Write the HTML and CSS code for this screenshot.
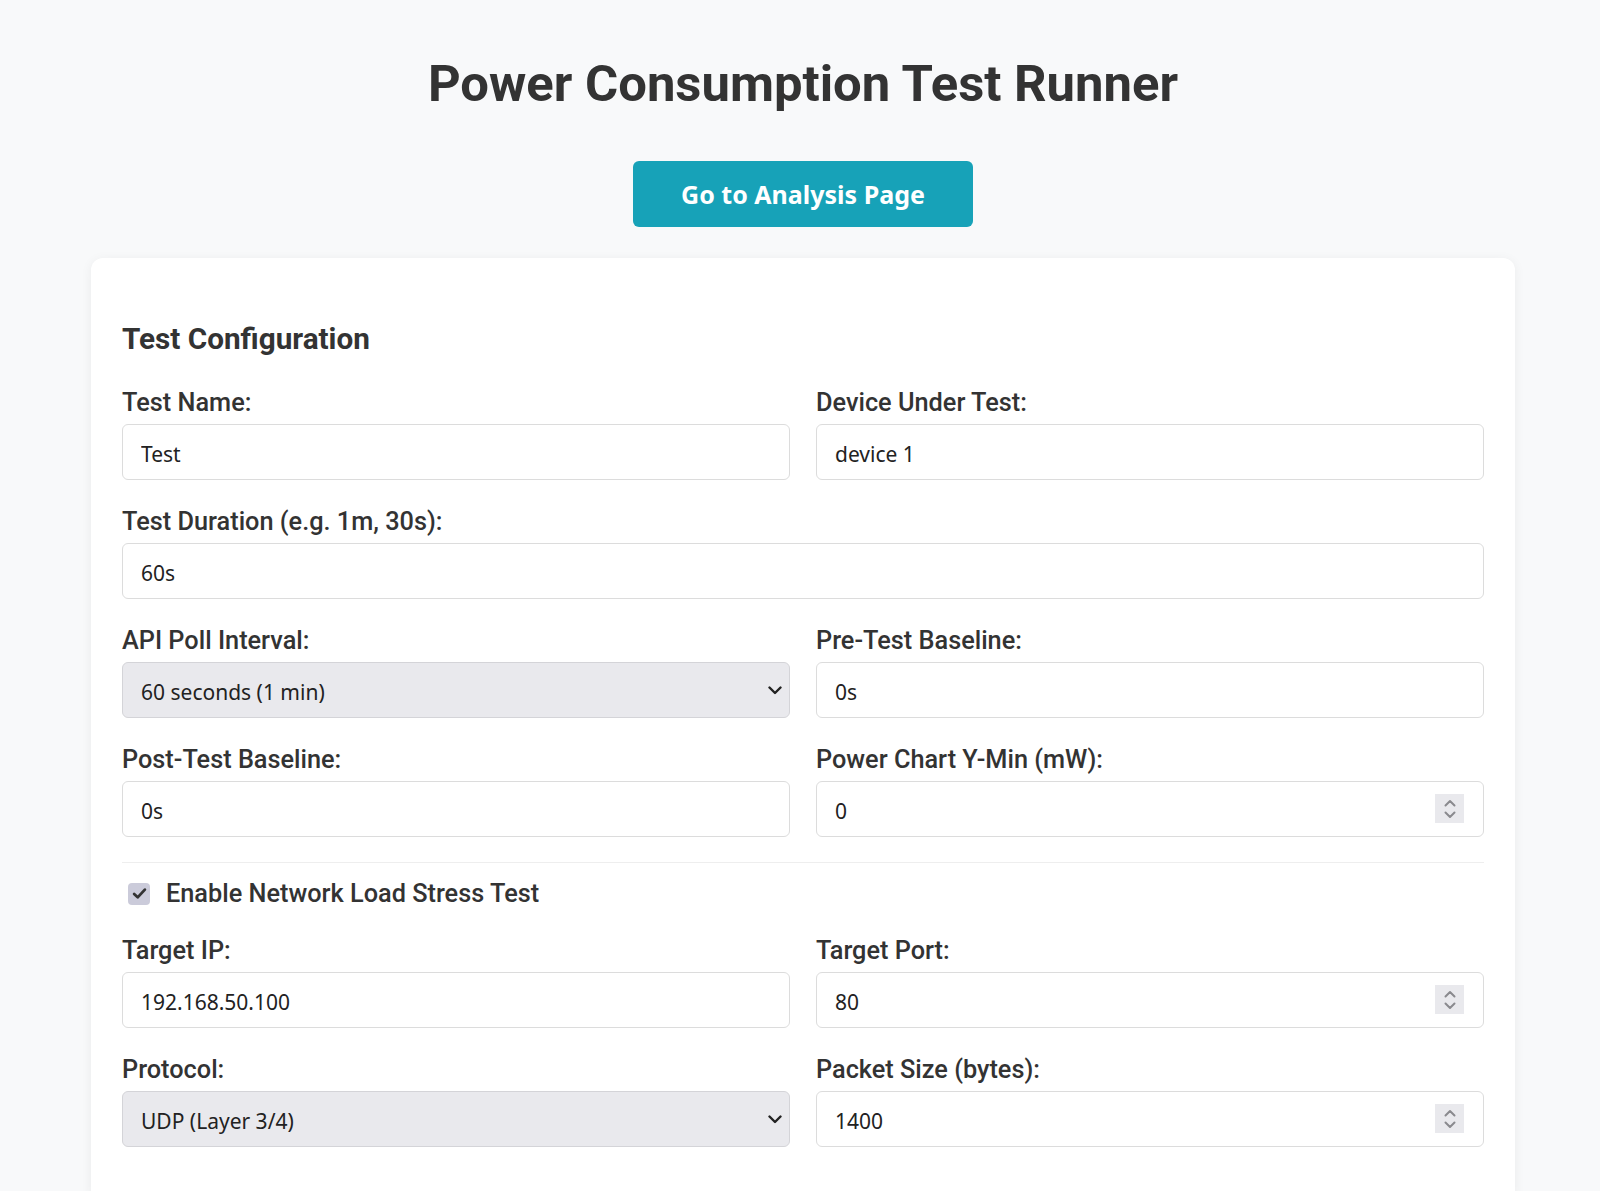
FILE: index.html
```html
<!DOCTYPE html>
<html lang="en">
<head>
<meta charset="utf-8">
<title>Power Consumption Test Runner</title>
<link rel="stylesheet" href="styles.css">
</head>
<body>
<div class="container">
  <h1 class="title">Power Consumption Test Runner</h1>
  <div class="nav">
    <button class="btn-info" type="button">Go to Analysis Page</button>
  </div>
  <div class="card">
    <h2 class="card-title">Test Configuration</h2>
    <div class="grid">
      <div class="group">
        <label class="label">Test Name:</label>
        <input class="field" type="text" value="Test">
      </div>
      <div class="group">
        <label class="label">Device Under Test:</label>
        <input class="field" type="text" value="device 1">
      </div>
      <div class="group span2">
        <label class="label">Test Duration (e.g. 1m, 30s):</label>
        <input class="field" type="text" value="60s">
      </div>
      <div class="group">
        <label class="label">API Poll Interval:</label>
        <div class="select-wrap">
          <select class="field select">
            <option>60 seconds (1 min)</option>
          </select>
          <svg class="chev" width="14" height="9" viewBox="0 0 14 9"><path d="M1.5 1.5 L7 7 L12.5 1.5" fill="none" stroke="#222" stroke-width="2.4" stroke-linecap="round" stroke-linejoin="round"/></svg>
        </div>
      </div>
      <div class="group">
        <label class="label">Pre-Test Baseline:</label>
        <input class="field" type="text" value="0s">
      </div>
      <div class="group">
        <label class="label">Post-Test Baseline:</label>
        <input class="field" type="text" value="0s">
      </div>
      <div class="group">
        <label class="label">Power Chart Y-Min (mW):</label>
        <div class="num-wrap">
          <input class="field" type="text" value="0">
          <span class="spin"><svg width="14" height="22" viewBox="0 0 14 22"><path d="M2.5 7.5 L7 3 L11.5 7.5" fill="none" stroke="#8a8a8e" stroke-width="2" stroke-linecap="round" stroke-linejoin="round"/><path d="M2.5 14.5 L7 19 L11.5 14.5" fill="none" stroke="#8a8a8e" stroke-width="2" stroke-linecap="round" stroke-linejoin="round"/></svg></span>
        </div>
      </div>
    </div>

    <div class="network">
      <div class="check-row">
        <span class="checkbox"><svg width="15" height="13" viewBox="0 0 14 12"><path d="M2 6.5 L5.3 9.6 L12 2.4" fill="none" stroke="#333" stroke-width="2.6" stroke-linecap="round" stroke-linejoin="round"/></svg></span>
        <span class="check-label">Enable Network Load Stress Test</span>
      </div>
      <div class="grid">
        <div class="group">
          <label class="label">Target IP:</label>
          <input class="field" type="text" value="192.168.50.100">
        </div>
        <div class="group">
          <label class="label">Target Port:</label>
          <div class="num-wrap">
            <input class="field" type="text" value="80">
            <span class="spin"><svg width="14" height="22" viewBox="0 0 14 22"><path d="M2.5 7.5 L7 3 L11.5 7.5" fill="none" stroke="#8a8a8e" stroke-width="2" stroke-linecap="round" stroke-linejoin="round"/><path d="M2.5 14.5 L7 19 L11.5 14.5" fill="none" stroke="#8a8a8e" stroke-width="2" stroke-linecap="round" stroke-linejoin="round"/></svg></span>
          </div>
        </div>
        <div class="group">
          <label class="label">Protocol:</label>
          <div class="select-wrap">
            <select class="field select">
              <option>UDP (Layer 3/4)</option>
            </select>
            <svg class="chev" width="14" height="9" viewBox="0 0 14 9"><path d="M1.5 1.5 L7 7 L12.5 1.5" fill="none" stroke="#222" stroke-width="2.4" stroke-linecap="round" stroke-linejoin="round"/></svg>
          </div>
        </div>
        <div class="group">
          <label class="label">Packet Size (bytes):</label>
          <div class="num-wrap">
            <input class="field" type="text" value="1400">
            <span class="spin"><svg width="14" height="22" viewBox="0 0 14 22"><path d="M2.5 7.5 L7 3 L11.5 7.5" fill="none" stroke="#8a8a8e" stroke-width="2" stroke-linecap="round" stroke-linejoin="round"/><path d="M2.5 14.5 L7 19 L11.5 14.5" fill="none" stroke="#8a8a8e" stroke-width="2" stroke-linecap="round" stroke-linejoin="round"/></svg></span>
          </div>
        </div>
      </div>
    </div>
  </div>
</div>
</body>
</html>
```
FILE: styles.css
```css
html, body {
  margin: 0;
  padding: 0;
  background: #f8f9fa;
}
body {
  padding-left: 6px;
  font-family: Roboto, "Liberation Sans", sans-serif;
  color: #333;
}
.container {
  max-width: 1424px;
  margin: 0 auto;
  padding-top: 55px;
}
.title {
  margin: 0;
  text-align: center;
  font-family: Roboto, sans-serif;
  font-weight: 700;
  font-size: 50.8px;
  line-height: 58px;
  color: #333;
}
.nav {
  display: flex;
  justify-content: center;
  margin-top: 48px;
}
.btn-info {
  background: #17a2b8;
  color: #fff;
  border: none;
  border-radius: 6px;
  padding: 16px 48px;
  font-family: "Noto Sans", "Open Sans", sans-serif;
  font-weight: 700;
  font-size: 25px;
  line-height: normal;
}
.card {
  margin-top: 31px;
  background: #fff;
  border-radius: 12px;
  box-shadow: 0 2px 12px rgba(0, 0, 0, 0.06);
  padding: 31px 31px 31px;
}
.card-title {
  margin: 32px 0 31.8px;
  font-size: 29.7px;
  font-weight: 700;
  line-height: 35px;
  color: #333;
}
.grid {
  display: grid;
  grid-template-columns: 1fr 1fr;
  column-gap: 26px;
}
.span2 {
  grid-column: 1 / span 2;
}
.group {
  margin-bottom: 26.3px;
  min-width: 0;
}
.label {
  display: block;
  font-size: 25.3px;
  font-weight: 500;
  line-height: 30px;
  margin-bottom: 6.7px;
  color: #333;
}
.field {
  display: block;
  box-sizing: border-box;
  width: 100%;
  height: 56px;
  margin: 0;
  padding: 4px 18px 0;
  border: 1px solid #dcdcdc;
  border-radius: 6px;
  background: #fff;
  font-family: "Noto Sans", "Open Sans", sans-serif;
  font-size: 21px;
  color: #222;
  outline: none;
}
.select {
  appearance: none;
  -webkit-appearance: none;
  background: #e9e9ed;
  border-color: #d4d4d8;
}
.select-wrap, .num-wrap {
  position: relative;
}
.chev {
  position: absolute;
  right: 8px;
  top: 24px;
}
.spin {
  position: absolute;
  right: 20px;
  top: 13px;
  width: 29px;
  height: 29px;
  background: #e9e9ed;
  display: flex;
  align-items: center;
  justify-content: center;
}
.network {
  margin-top: -2px;
  border-top: 1px solid #eee;
  padding-top: 14px;
}
.check-row {
  display: flex;
  align-items: center;
  height: 34px;
  margin-bottom: 24.8px;
  padding-left: 6px;
}
.checkbox {
  width: 22px;
  height: 22px;
  border-radius: 4px;
  background: #cbcbda;
  display: flex;
  align-items: center;
  justify-content: center;
  margin-right: 16px;
}
.check-label {
  font-size: 25.3px;
  font-weight: 500;
  color: #333;
}
```
